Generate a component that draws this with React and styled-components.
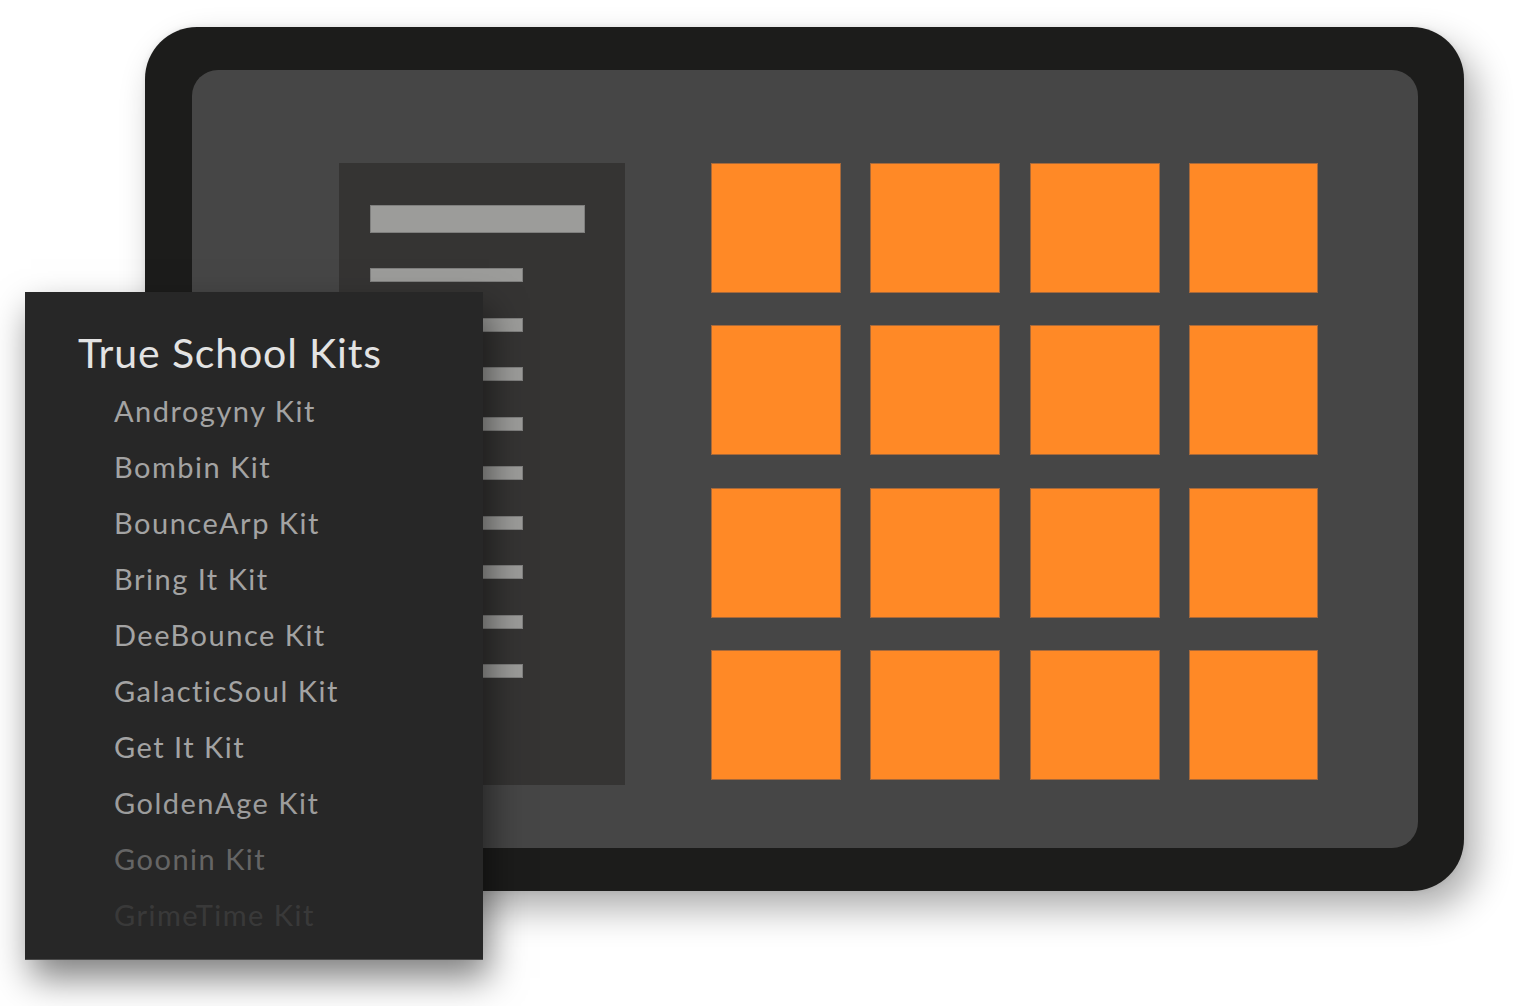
import React from "react";
import styled, { createGlobalStyle } from "styled-components";

const Global = createGlobalStyle`
  html, body { margin: 0; padding: 0; background: #ffffff; }
  body { font-family: Lato, "Noto Sans", sans-serif; }
  #root { width: 1518px; height: 1006px; overflow: hidden; }
`;

const Canvas = styled.div`
  position: relative;
  width: 1518px;
  height: 1006px;
  padding: 27px 0 0 145px;
  box-sizing: border-box;
`;

const Device = styled.div`
  width: 1319px;
  height: 864px;
  box-sizing: border-box;
  padding: 43px 46px 43px 47px;
  background: #1c1c1b;
  border-radius: 52px;
  box-shadow: 12px 18px 36px rgba(0, 0, 0, 0.32), 0 0 6px rgba(0, 0, 0, 0.08);
`;

const Screen = styled.div`
  width: 100%;
  height: 100%;
  background: #464646;
  border-radius: 26px;
  display: flex;
  align-items: flex-start;
  padding: 93px 0 0 147px;
  box-sizing: border-box;
`;

const SidePanel = styled.div`
  width: 286px;
  height: 622px;
  background: #353433;
  display: flex;
  flex-direction: column;
  padding: 42px 0 0 31px;
  box-sizing: border-box;
`;

const Bar = styled.div`
  width: ${(p) => (p.$wide ? 215 : 153)}px;
  height: ${(p) => (p.$wide ? 28 : 14)}px;
  margin-bottom: ${(p) => (p.$wide ? 35 : 35.5)}px;
  background: #9c9c9a;
  box-shadow: inset 0 0 0 1px rgba(0, 0, 0, 0.18);
`;

const PadGrid = styled.div`
  margin-left: 86px;
  display: grid;
  grid-template-columns: 130px 130px 130px 129px;
  grid-template-rows: 130px 130px 130px 130px;
  column-gap: 30px 29px;
  column-gap: 29.3px;
  row-gap: 32.3px;
`;

const Pad = styled.div`
  background: #ff8926;
  box-shadow: inset 0 0 0 1px #a8693a;
`;

const Menu = styled.div`
  position: absolute;
  left: 25px;
  top: 292px;
  width: 458px;
  height: 668px;
  box-sizing: border-box;
  background: #272727;
  border-bottom: 1px solid #4a4a4a;
  padding: 37px 0 0 53px;
  box-shadow: 6px 18px 34px rgba(0, 0, 0, 0.5);
`;

const MenuTitle = styled.div`
  font-family: Lato, "Noto Sans", sans-serif;
  font-size: 41px;
  line-height: 48px;
  color: #e3e3e3;
  letter-spacing: 0.85px;
  margin-bottom: 5.5px;
`;

const MenuItem = styled.div`
  font-family: Lato, "Noto Sans", sans-serif;
  font-size: 29px;
  line-height: 56px;
  padding-left: 36px;
  color: #a3a3a3;
  letter-spacing: 1.5px;
  opacity: ${(p) => p.$fade};
`;

const kits = [
  ["Androgyny Kit", 1],
  ["Bombin Kit", 1],
  ["BounceArp Kit", 1],
  ["Bring It Kit", 1],
  ["DeeBounce Kit", 1],
  ["GalacticSoul Kit", 1],
  ["Get It Kit", 1],
  ["GoldenAge Kit", 0.95],
  ["Goonin Kit", 0.5],
  ["GrimeTime Kit", 0.15],
];

export default function App() {
  return (
    <>
      <Global />
      <Canvas>
        <Device>
          <Screen>
            <SidePanel>
              <Bar $wide />
              {Array.from({ length: 9 }).map((_, i) => (
                <Bar key={i} />
              ))}
            </SidePanel>
            <PadGrid>
              {Array.from({ length: 16 }).map((_, i) => (
                <Pad key={i} />
              ))}
            </PadGrid>
          </Screen>
        </Device>
        <Menu>
          <MenuTitle>True School Kits</MenuTitle>
          {kits.map(([name, fade]) => (
            <MenuItem key={name} $fade={fade}>
              {name}
            </MenuItem>
          ))}
        </Menu>
      </Canvas>
    </>
  );
}
